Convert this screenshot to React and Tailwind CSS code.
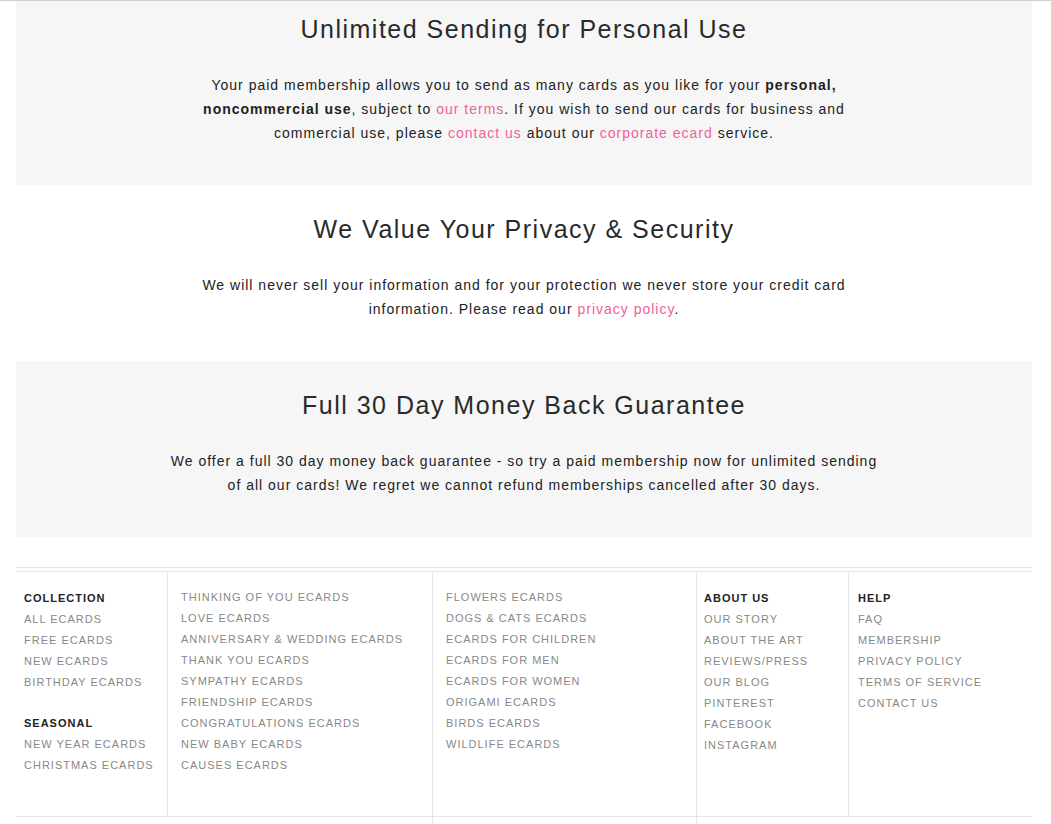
import React from 'react';

const pink = 'text-[#f0609a]';

const Section = ({ title, gray, first, children }) => (
  <section className={`${gray ? 'bg-[#f6f6f6]' : 'bg-white'} ${first ? 'pt-[11px]' : 'pt-[27px]'} pb-[40px] px-4 text-center`}>
    <h2 className="text-[25px] leading-[34px] tracking-[1.5px] text-[#2a2a2a]">{title}</h2>
    <p className="mx-auto mt-[27px] max-w-[712px] text-[14px] leading-[24px] tracking-[1px] text-[#222]">
      {children}
    </p>
  </section>
);

const Item = ({ children }) => (
  <li className="h-[21px] leading-[21px] text-[11px] tracking-[1px] text-[#888] uppercase">{children}</li>
);

const Head = ({ children }) => (
  <li className="h-[21px] leading-[21px] text-[11px] tracking-[1px] font-bold text-[#222] uppercase">{children}</li>
);

const col2 = ['Thinking of you ecards', 'Love ecards', 'Anniversary & wedding ecards', 'Thank you ecards', 'Sympathy ecards', 'Friendship ecards', 'Congratulations ecards', 'New baby ecards', 'Causes ecards'];
const col3 = ['Flowers ecards', 'Dogs & cats ecards', 'Ecards for children', 'Ecards for men', 'Ecards for women', 'Origami ecards', 'Birds ecards', 'Wildlife ecards'];
const col4 = ['Our story', 'About the art', 'Reviews/press', 'Our blog', 'Pinterest', 'Facebook', 'Instagram'];
const col5 = ['FAQ', 'Membership', 'Privacy policy', 'Terms of service', 'Contact us'];

export default function App() {
  return (
    <div className="min-h-screen bg-white border-t border-[#cfcfcf] font-['Liberation_Sans',Arial,sans-serif]">
      <div className="ml-4 w-[1016px]">
        <Section title="Unlimited Sending for Personal Use" gray first>
          Your paid membership allows you to send as many cards as you like for your <b>personal, noncommercial use</b>, subject to <a className={pink}>our terms</a>. If you wish to send our cards for business and commercial use, please <a className={pink}>contact us</a> about our <a className={pink}>corporate ecard</a> service.
        </Section>
        <Section title="We Value Your Privacy & Security">
          We will never sell your information and for your protection we never store your credit card information. Please read our <a className={pink}>privacy policy</a>.
        </Section>
        <Section title="Full 30 Day Money Back Guarantee" gray>
          We offer a full 30 day money back guarantee - so try a paid membership now for unlimited sending of all our cards! We regret we cannot refund memberships cancelled after 30 days.
        </Section>

        <footer className="mt-[30px] border-t border-[#e6e6e6] pt-[3px]">
          <div className="flex border-t border-b border-[#e6e6e6] h-[246px]">
            <ul className="w-[152px] border-r border-[#e6e6e6] pl-2 pt-[16px]">
              <Head>Collection</Head>
              <Item>All ecards</Item>
              <Item>Free ecards</Item>
              <Item>New ecards</Item>
              <Item>Birthday ecards</Item>
              <li className="h-[20px]" />
              <Head>Seasonal</Head>
              <Item>New year ecards</Item>
              <Item>Christmas ecards</Item>
            </ul>
            <ul className="w-[265px] border-r border-[#e6e6e6] pl-[13px] pt-[15px]">
              {col2.map((t) => <Item key={t}>{t}</Item>)}
            </ul>
            <ul className="w-[264px] border-r border-[#e6e6e6] pl-[13px] pt-[15px]">
              {col3.map((t) => <Item key={t}>{t}</Item>)}
            </ul>
            <ul className="w-[152px] border-r border-[#e6e6e6] pl-[7px] pt-[16px]">
              <Head>About us</Head>
              {col4.map((t) => <Item key={t}>{t}</Item>)}
            </ul>
            <ul className="flex-1 pl-[9px] pt-[16px]">
              <Head>Help</Head>
              {col5.map((t) => <Item key={t}>{t}</Item>)}
            </ul>
          </div>
          <div className="flex h-[40px]">
            <div className="w-[417px] border-r border-[#e6e6e6]" />
            <div className="w-[264px] border-r border-[#e6e6e6]" />
            <div className="flex-1" />
          </div>
        </footer>
      </div>
    </div>
  );
}
